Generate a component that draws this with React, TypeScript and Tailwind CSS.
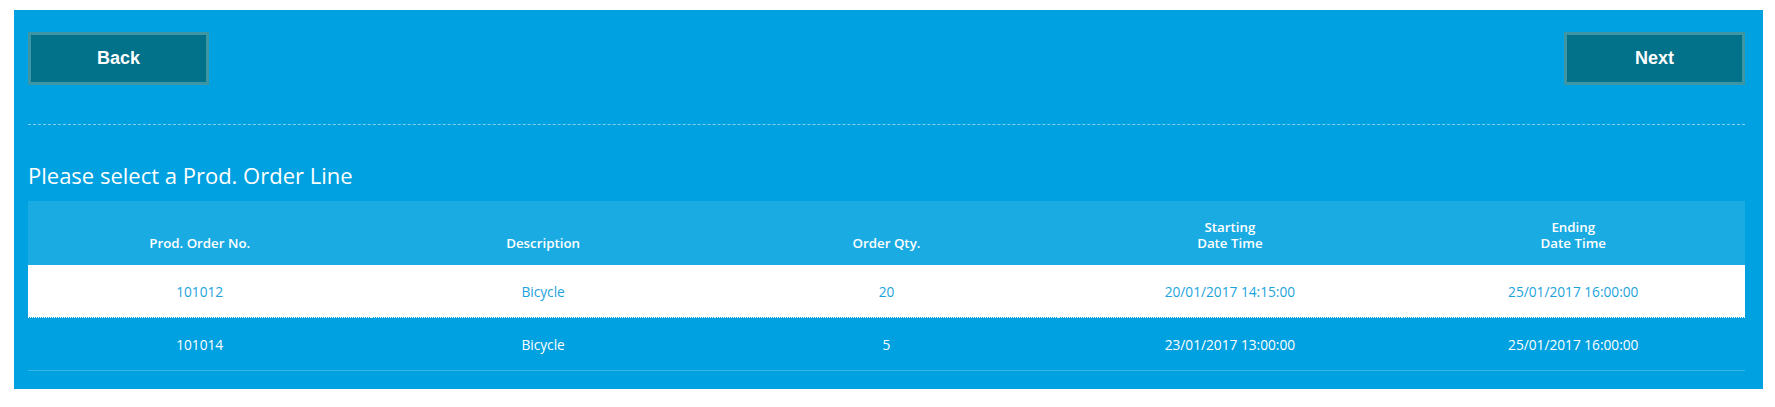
import React from "react";

interface OrderLine {
  no: string;
  description: string;
  qty: string;
  start: string;
  end: string;
}

const lines: OrderLine[] = [
  { no: "101012", description: "Bicycle", qty: "20", start: "20/01/2017 14:15:00", end: "25/01/2017 16:00:00" },
  { no: "101014", description: "Bicycle", qty: "5", start: "23/01/2017 13:00:00", end: "25/01/2017 16:00:00" },
];

const font = { fontFamily: '"Segoe UI", "Open Sans", "Noto Sans", sans-serif' };

function NavButton({ label }: { label: string }) {
  return (
    <button className="w-[181px] h-[53px] bg-[#02718a] border-[3px] border-[#3e95a4] text-white text-[18px] font-bold font-['Liberation_Sans',Arial,sans-serif]">
      {label}
    </button>
  );
}

export default function App() {
  return (
    <div className="w-[1775px] h-[407px] bg-white pt-[10px] pl-[14px]">
      <div className="w-[1749px] h-[379px] bg-[#00a1e0] pl-[14px] pr-[18px] pt-[22px]" style={font}>
        {/* TOP BAR */}
        <div className="flex items-center justify-between">
          <NavButton label="Back" />
          <NavButton label="Next" />
        </div>
        <div className="mt-[39px] border-t border-dashed border-white/50" />

        <h2 className="mt-[36px] text-white text-[22px] leading-[28px]">Please select a Prod. Order Line</h2>

        <table className="mt-[12px] w-full table-fixed border-collapse text-[13.7px]">
          <thead>
            <tr className="h-[64px] bg-[#1babe3] text-white text-[13.3px]">
              <th className="align-bottom pb-[14px] leading-[16px] font-semibold">Prod. Order No.</th>
              <th className="align-bottom pb-[14px] leading-[16px] font-semibold">Description</th>
              <th className="align-bottom pb-[14px] leading-[16px] font-semibold">Order Qty.</th>
              <th className="align-bottom pb-[14px] leading-[16px] font-semibold">
                Starting
                <br />
                Date Time
              </th>
              <th className="align-bottom pb-[14px] leading-[16px] font-semibold">
                Ending
                <br />
                Date Time
              </th>
            </tr>
          </thead>
          <tbody>
            {lines.map((l, i) => (
              <tr
                key={l.no}
                className={
                  i === 0
                    ? "h-[52px] bg-white text-[#1ba3dc] border-b border-dotted border-white"
                    : "h-[53px] text-white border-b border-[#3bb6e8]"
                }
              >
                <td className="text-center pt-[3px]">{l.no}</td>
                <td className="text-center pt-[3px]">{l.description}</td>
                <td className="text-center pt-[3px]">{l.qty}</td>
                <td className="text-center pt-[3px]">{l.start}</td>
                <td className="text-center pt-[3px]">{l.end}</td>
              </tr>
            ))}
          </tbody>
        </table>
      </div>
    </div>
  );
}
